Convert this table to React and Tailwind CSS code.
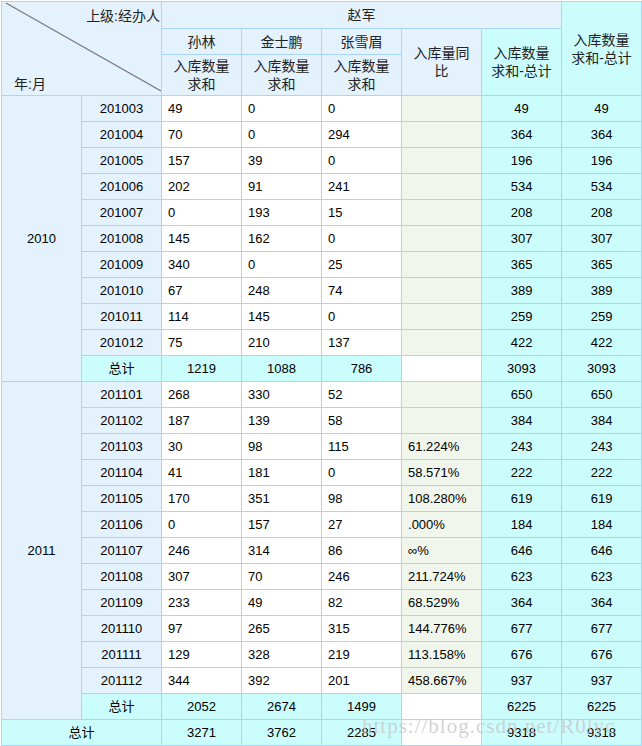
import React from 'react';

const B = 'border border-[#a9d5f6]';
const HEAD = `${B} bg-[#e4f2fe]`;
const CYAN = `${B} bg-[#ccfdfd]`;
const WHITE = `${B} bg-white`;
const RATIO = `${B} bg-[#f1f6ec]`;

const y2010 = [
  ['201003', 49, 0, 0, '', 49],
  ['201004', 70, 0, 294, '', 364],
  ['201005', 157, 39, 0, '', 196],
  ['201006', 202, 91, 241, '', 534],
  ['201007', 0, 193, 15, '', 208],
  ['201008', 145, 162, 0, '', 307],
  ['201009', 340, 0, 25, '', 365],
  ['201010', 67, 248, 74, '', 389],
  ['201011', 114, 145, 0, '', 259],
  ['201012', 75, 210, 137, '', 422],
];

const y2011 = [
  ['201101', 268, 330, 52, '', 650],
  ['201102', 187, 139, 58, '', 384],
  ['201103', 30, 98, 115, '61.224%', 243],
  ['201104', 41, 181, 0, '58.571%', 222],
  ['201105', 170, 351, 98, '108.280%', 619],
  ['201106', 0, 157, 27, '.000%', 184],
  ['201107', 246, 314, 86, '∞%', 646],
  ['201108', 307, 70, 246, '211.724%', 623],
  ['201109', 233, 49, 82, '68.529%', 364],
  ['201110', 97, 265, 315, '144.776%', 677],
  ['201111', 129, 328, 219, '113.158%', 676],
  ['201112', 344, 392, 201, '458.667%', 937],
];

const years = [
  { year: '2010', rows: y2010, total: [1219, 1088, 786, 3093] },
  { year: '2011', rows: y2011, total: [2052, 2674, 1499, 6225] },
];

const DataRow = ({ r, yearCell }) => (
  <tr className="h-[26px]">
    {yearCell}
    <td className={`${HEAD} text-center`}>{r[0]}</td>
    <td className={`${WHITE} pl-[6px]`}>{r[1]}</td>
    <td className={`${WHITE} pl-[6px]`}>{r[2]}</td>
    <td className={`${WHITE} pl-[6px]`}>{r[3]}</td>
    <td className={`${RATIO} pl-[6px]`}>{r[4]}</td>
    <td className={`${CYAN} text-center`}>{r[5]}</td>
    <td className={`${CYAN} text-center`}>{r[5]}</td>
  </tr>
);

const TotalRow = ({ label, vals, wide }) => (
  <tr className="h-[26px]">
    <td colSpan={wide ? 2 : 1} className={`${CYAN} text-center`}>{label}</td>
    <td className={`${CYAN} text-center`}>{vals[0]}</td>
    <td className={`${CYAN} text-center`}>{vals[1]}</td>
    <td className={`${CYAN} text-center`}>{vals[2]}</td>
    <td className={WHITE}></td>
    <td className={`${CYAN} text-center`}>{vals[3]}</td>
    <td className={`${CYAN} text-center`}>{vals[3]}</td>
  </tr>
);

export default function App() {
  return (
    <div className="relative w-[642px] h-[746px] bg-white pt-[1px] pl-[1px] font-['Liberation_Sans','Noto_Sans_CJK_SC',sans-serif] text-[13px] text-black leading-[18px]">
      <table className="table-fixed border-collapse w-[641px]">
        <colgroup>
          {Array.from({ length: 8 }).map((_, i) => (
            <col key={i} className="w-[80px]" />
          ))}
        </colgroup>
        <thead className="text-[14px] text-[#222]">
          <tr className="h-[27px]">
            <td colSpan={2} rowSpan={3} className={`${HEAD} relative p-0`}>
              <svg className="absolute inset-0 w-full h-full" preserveAspectRatio="none" viewBox="0 0 160 94">
                <line x1="4" y1="1" x2="160" y2="90" stroke="#7a7a7a" strokeWidth="1.3" />
              </svg>
              <div className="relative h-[92px] flex flex-col justify-between pt-[4px] pb-[2px]">
                <div className="text-right pr-[1px]">上级:经办人</div>
                <div className="pl-[12px]">年:月</div>
              </div>
            </td>
            <td colSpan={5} className={`${HEAD} text-center`}>赵军</td>
            <td rowSpan={3} className={`${CYAN} text-center`}>
              入库数量<br />求和-总计
            </td>
          </tr>
          <tr className="h-[26px]">
            <td className={`${HEAD} text-center`}>孙林</td>
            <td className={`${HEAD} text-center`}>金士鹏</td>
            <td className={`${HEAD} text-center`}>张雪眉</td>
            <td rowSpan={2} className={`${HEAD} text-center`}>
              入库量同<br />比
            </td>
            <td rowSpan={2} className={`${CYAN} text-center`}>
              入库数量<br />求和-总计
            </td>
          </tr>
          <tr className="h-[41px]">
            <td className={`${HEAD} text-center`}>入库数量<br />求和</td>
            <td className={`${HEAD} text-center`}>入库数量<br />求和</td>
            <td className={`${HEAD} text-center`}>入库数量<br />求和</td>
          </tr>
        </thead>
        <tbody>
          {years.map((y) => (
            <React.Fragment key={y.year}>
              {y.rows.map((r, i) => (
                <DataRow
                  key={r[0]}
                  r={r}
                  yearCell={
                    i === 0 ? (
                      <td rowSpan={y.rows.length + 1} className={`${HEAD} text-center`}>
                        {y.year}
                      </td>
                    ) : null
                  }
                />
              ))}
              <TotalRow label="总计" vals={y.total} />
            </React.Fragment>
          ))}
          <TotalRow label="总计" vals={[3271, 3762, 2285, 9318]} wide />
        </tbody>
      </table>
      <div className="absolute left-[362px] top-[717px] font-['Liberation_Serif',serif] text-[21px] text-[#c8c8c8]/80 tracking-[1px] pointer-events-none">
        https://blog.csdn.net/R0lyc
      </div>
    </div>
  );
}
